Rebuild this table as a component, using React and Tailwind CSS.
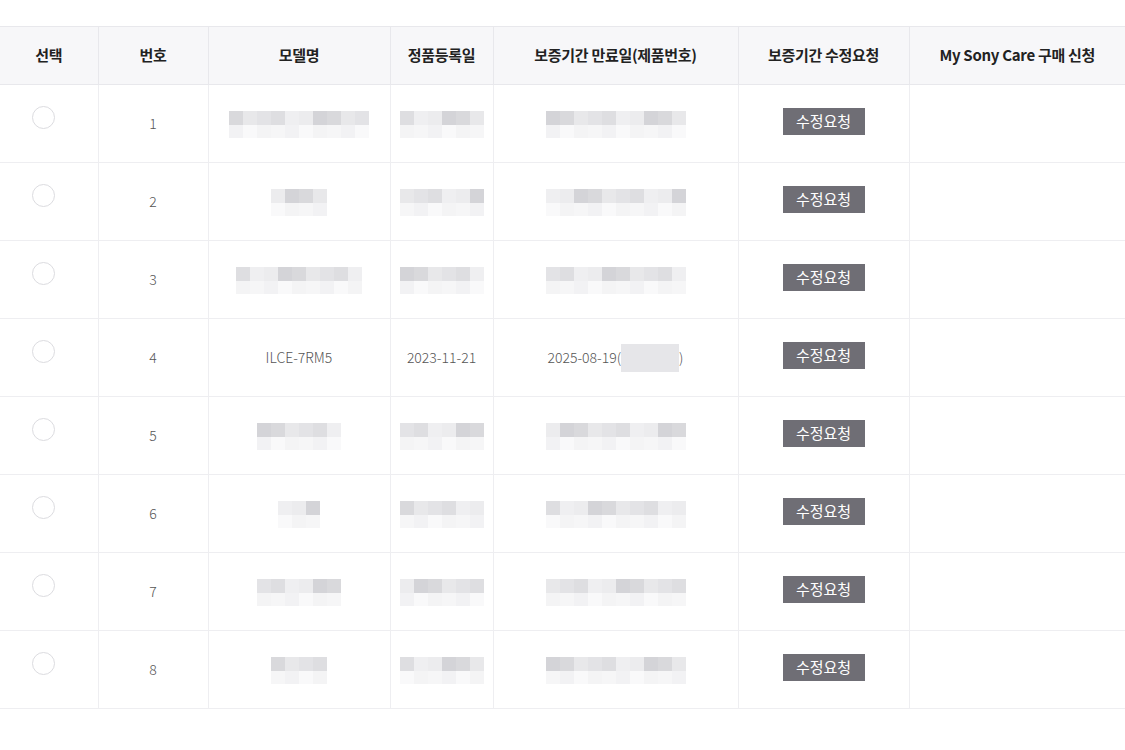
import React from 'react'

const columns = [
  { label: '선택', width: 98 },
  { label: '번호', width: 110 },
  { label: '모델명', width: 182 },
  { label: '정품등록일', width: 103 },
  { label: '보증기간 만료일(제품번호)', width: 245 },
  { label: '보증기간 수정요청', width: 171 },
  { label: 'My Sony Care 구매 신청', width: 216 },
]

const shades = ['#e3e3e6', '#d9d9dc', '#ececee', '#dedee1', '#e8e8ea', '#d4d4d8', '#efeff1']
const faint = ['#f6f6f7', '#f2f2f4', '#f9f9fa', '#f4f4f5']

// blurred placeholder made of pixel blocks
function Blur({ blocks, seed = 1 }) {
  const top = []
  const bottom = []
  for (let i = 0; i < blocks; i++) {
    top.push(shades[(i * 3 + seed) % shades.length])
    bottom.push(faint[(i * 5 + seed) % faint.length])
  }
  return (
    <div className="inline-flex flex-col">
      <div className="flex">
        {top.map((c, i) => (
          <div key={i} className="w-[14px] h-[14px]" style={{ background: c }} />
        ))}
      </div>
      <div className="flex">
        {bottom.map((c, i) => (
          <div key={i} className="w-[14px] h-[13px]" style={{ background: c }} />
        ))}
      </div>
    </div>
  )
}

const rows = [
  { n: 1, model: 10, date: 6, serial: 10 },
  { n: 2, model: 4, date: 6, serial: 10 },
  { n: 3, model: 9, date: 6, serial: 10 },
  { n: 4 },
  { n: 5, model: 6, date: 6, serial: 10 },
  { n: 6, model: 3, date: 6, serial: 10 },
  { n: 7, model: 6, date: 6, serial: 10 },
  { n: 8, model: 4, date: 6, serial: 10 },
]

function App() {
  return (
    <div
      className="w-[1125px] h-[750px] bg-white pt-[26px] overflow-hidden"
      style={{ fontFamily: '"Noto Sans CJK KR", "Noto Sans", sans-serif' }}
    >
      <table className="border-collapse table-fixed w-[1125px]">
        <colgroup>
          {columns.map((c) => (
            <col key={c.label} style={{ width: c.width }} />
          ))}
        </colgroup>
        <thead>
          <tr className="h-[58px] bg-[#f7f7f9]">
            {columns.map((c, i) => (
              <th
                key={c.label}
                className={`border-t border-b border-[#e8e8ec] text-[15px] font-bold text-[#222] tracking-[-0.3px] ${
                  i > 0 ? 'border-l' : ''
                }`}
              >
                {c.label}
              </th>
            ))}
          </tr>
        </thead>
        <tbody>
          {rows.map((row) => (
            <tr key={row.n} className="h-[78px]">
              <td className="border-b border-[#eeeef1] align-middle">
                <div className="ml-[32px] w-[23px] h-[23px] rounded-full border border-[#dcdce0] -translate-y-[6px]" />
              </td>
              <td className="border-b border-l border-[#eeeef1] text-center text-[14px] font-light text-[#555]">
                {row.n}
              </td>
              <td className="border-b border-l border-[#eeeef1] text-center text-[14px] font-light text-[#555]">
                {row.model ? <Blur blocks={row.model} seed={row.n} /> : 'ILCE-7RM5'}
              </td>
              <td className="border-b border-l border-[#eeeef1] text-center text-[14px] font-light text-[#555]">
                {row.date ? <Blur blocks={row.date} seed={row.n + 2} /> : '2023-11-21'}
              </td>
              <td className="border-b border-l border-[#eeeef1] text-center text-[14px] font-light text-[#555]">
                {row.serial ? (
                  <Blur blocks={row.serial} seed={row.n + 4} />
                ) : (
                  <span className="inline-flex items-center">
                    2025-08-19(
                    <span className="inline-block w-[58px] h-[28px] bg-[#e6e6e9]" />)
                  </span>
                )}
              </td>
              <td className="border-b border-l border-[#eeeef1] text-center">
                <button className="w-[82px] h-[27px] bg-[#6f6e75] text-white text-[15px] -translate-y-[2px]">
                  수정요청
                </button>
              </td>
              <td className="border-b border-l border-[#eeeef1]" />
            </tr>
          ))}
        </tbody>
      </table>
    </div>
  )
}

export default App
